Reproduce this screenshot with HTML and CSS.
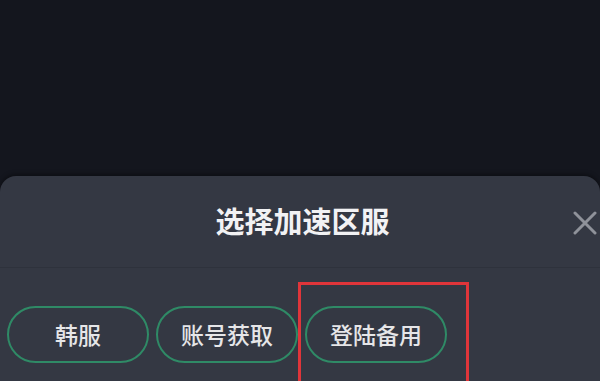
FILE: index.html
```html
<!DOCTYPE html>
<html lang="zh-CN">
<head>
<meta charset="utf-8">
<title>选择加速区服</title>
<link rel="stylesheet" href="styles.css">
</head>
<body>
<div class="backdrop"></div>
<section class="sheet">
  <header class="sheet-head">
    <h1 class="title">选择加速区服</h1>
    <button class="close" aria-label="关闭">
      <svg viewBox="0 0 24 24" width="24" height="24"><path d="M2 2L22 22M22 2L2 22" stroke="#8f929a" stroke-width="3" stroke-linecap="round" fill="none"/></svg>
    </button>
  </header>
  <div class="sheet-body">
    <div class="options">
      <button class="pill">韩服</button>
      <button class="pill">账号获取</button>
      <button class="pill">登陆备用</button>
      <div class="mark"></div>
    </div>
  </div>
</section>
</body>
</html>
```
FILE: styles.css
```css
html, body {
  margin: 0;
  padding: 0;
  height: 100%;
  overflow: hidden;
}
body {
  background: #14161e;
  font-family: "Noto Sans CJK SC", "Noto Sans", sans-serif;
  display: flex;
  flex-direction: column;
}
.backdrop {
  height: 176px;
  flex: none;
}
.sheet {
  flex: 1;
  background: #343843;
  border-radius: 16px 16px 0 0;
  box-shadow: 0 -2px 4px rgba(0,0,0,0.35);
  display: flex;
  flex-direction: column;
}
.sheet-head {
  position: relative;
  height: 91px;
  display: flex;
  align-items: center;
  justify-content: center;
  border-bottom: 1px solid #2e323c;
}
.title {
  margin: 0;
  margin-left: 5px;
  font-size: 29px;
  font-weight: 700;
  color: #f2f2f4;
  letter-spacing: 0;
  line-height: 1;
  padding-bottom: 2px;
}
.close {
  position: absolute;
  right: 3px;
  top: 35px;
  width: 24px;
  height: 24px;
  padding: 0;
  border: 0;
  background: none;
  display: block;
}
.close svg { display: block; }
.sheet-body {
  padding: 38px 0 0 7px;
}
.options {
  position: relative;
  display: flex;
  gap: 7px;
}
.pill {
  width: 142px;
  height: 57px;
  border: 2.5px solid #2f8a66;
  border-radius: 29px;
  background: transparent;
  color: #e6e6e8;
  font-family: "Noto Sans CJK SC", "Noto Sans", sans-serif;
  font-size: 23px;
  font-weight: 500;
  padding: 0 0 2px;
  box-sizing: border-box;
}
.mark {
  position: absolute;
  left: 291px;
  top: -24px;
  width: 171px;
  height: 110px;
  border: 3px solid #e0353a;
  box-sizing: border-box;
}
```
